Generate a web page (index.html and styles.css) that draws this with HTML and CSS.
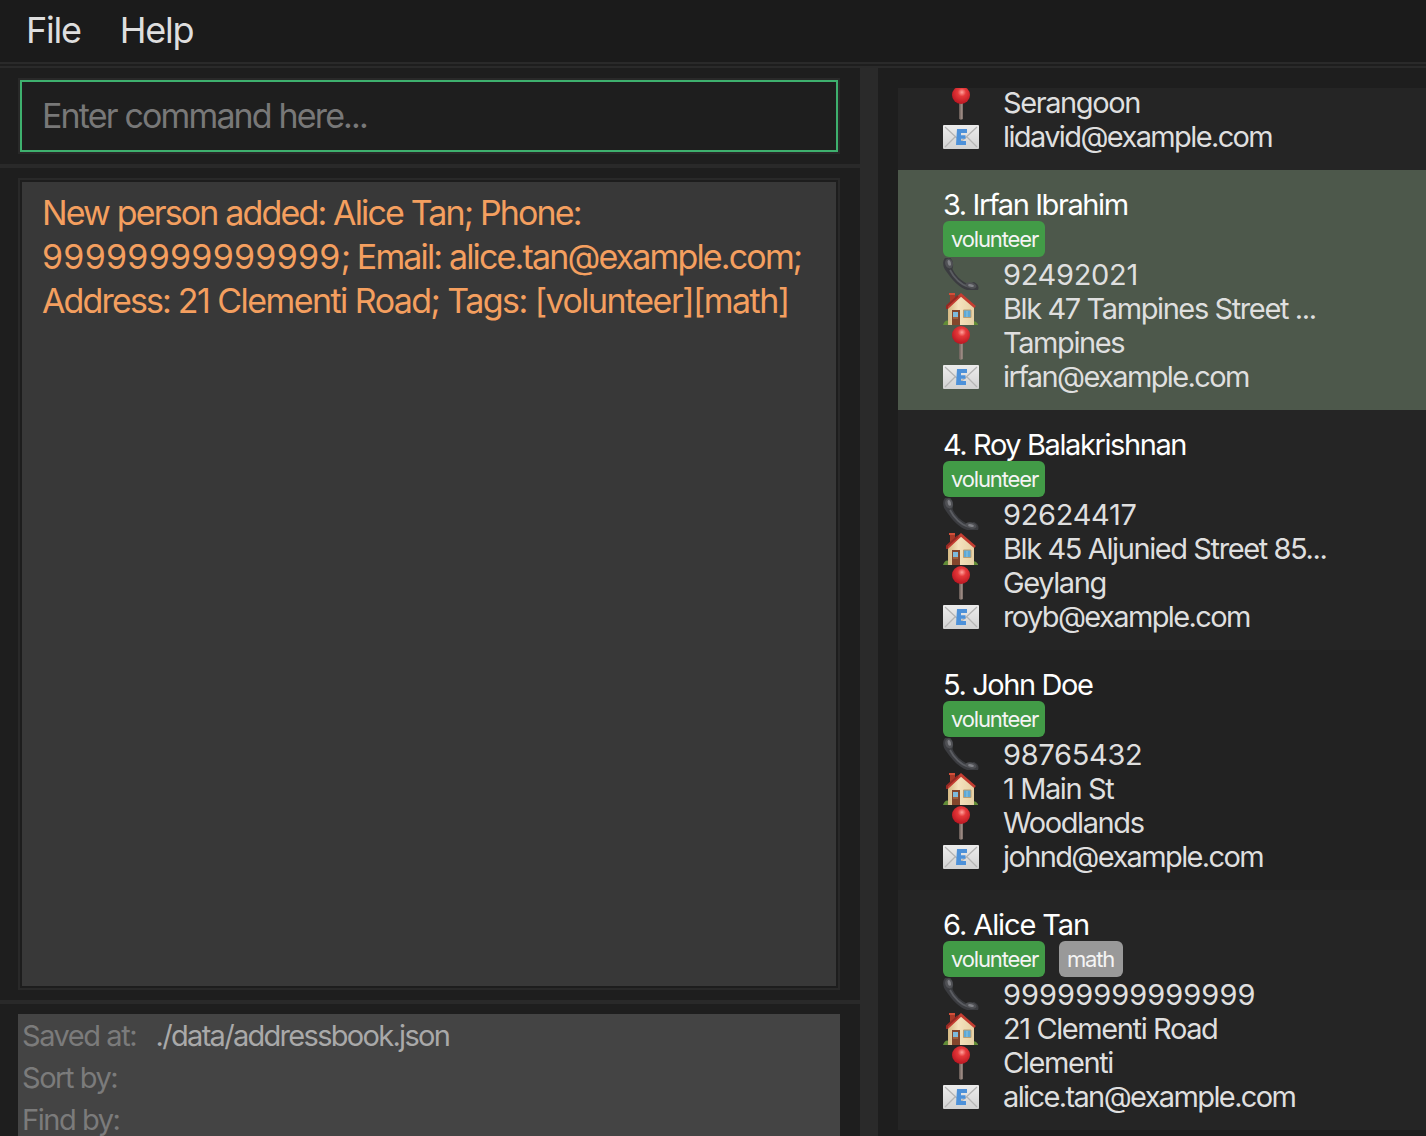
FILE: index.html
```html
<!DOCTYPE html>
<html lang="en">
<head>
<meta charset="utf-8">
<title>Address Book</title>
<link rel="stylesheet" href="styles.css">
</head>
<body>
<svg class="defs" width="0" height="0" aria-hidden="true">
  <defs>
    <linearGradient id="paper" x1="0" y1="0" x2="0" y2="1"><stop offset="0" stop-color="#ededed"/><stop offset="1" stop-color="#d2d2d2"/></linearGradient>
    <radialGradient id="ball" cx=".55" cy=".35" r=".65"><stop offset="0" stop-color="#ffa29b"/><stop offset=".35" stop-color="#e5393a"/><stop offset="1" stop-color="#b91520"/></radialGradient>
    <linearGradient id="wall" x1="0" y1="0" x2="1" y2="0"><stop offset="0" stop-color="#d5b984"/><stop offset=".4" stop-color="#f4e2bd"/><stop offset="1" stop-color="#e6d0a4"/></linearGradient>
    <symbol id="phone" viewBox="0 0 36 34">
      <path d="M2 0C-1 4 0 9 3 13C9 22 17 30 24 32L35 32Q37 27 31 24L25 26C18 23 12 17 9.500 11Q11.500 4 7.500 0Z" fill="#3b3c40"/>
      <path d="M7 12C11 20 18 27 25 28.500" fill="none" stroke="#5b5d62" stroke-width="1.800"/>
      <ellipse cx="6" cy="5.500" rx="3.800" ry="5" fill="#505155" transform="rotate(-15 6 5.500)"/>
      <ellipse cx="6.300" cy="5" rx="1.600" ry="3" fill="#818287" transform="rotate(-15 6 5)"/>
      <ellipse cx="28" cy="27.500" rx="5.500" ry="3" fill="#505155" transform="rotate(12 28 27.500)"/>
      <ellipse cx="28" cy="27.500" rx="3" ry="1.400" fill="#818287" transform="rotate(12 28 27.500)"/>
    </symbol>
    <symbol id="house" viewBox="0 0 36 34">
      <path d="M0 33Q2 27 6 29L8 33ZM28 33Q31 26 35 32V33Z" fill="#628d37"/>
      <path d="M7 2H12V10H7Z" fill="#a83a29"/><path d="M6 1H12V3H6Z" fill="#d14e39"/>
      <path d="M5 33V15L18 3L31 15V33Z" fill="url(#wall)"/>
      <path d="M4 16L18 3L32 15" fill="none" stroke="#c43d31" stroke-width="2.800"/>
      <path d="M4 17V14L15 4" fill="none" stroke="#952923" stroke-width="2"/>
      <path d="M9 18H17V33H9Z" fill="#83462c"/>
      <path d="M10 20H15V25H10Z" fill="#7dbbdc"/><path d="M10 25H15V27H10Z" fill="#a1623e"/>
      <path d="M20.500 18H28V25.500H20.500Z" fill="#5da9d8" stroke="#bd9f72"/>
      <path d="M24 19V25" stroke="#8dc4df"/>
    </symbol>
    <symbol id="pin" viewBox="0 0 36 34">
      <path d="M16.500 16H19.800V33Q18 34 16.500 33Z" fill="#9b8982"/><path d="M16.300 16H17.600V33H16.300Z" fill="#756762"/>
      <circle cx="18" cy="9" r="9" fill="url(#ball)"/>
    </symbol>
    <symbol id="mail" viewBox="0 0 36 34">
      <rect x="0" y="5" width="36" height="24" rx="1" fill="url(#paper)"/>
      <path d="M2 7L15 19Q18 22 21 19L34 7M2 27L12 17M34 27L24 17" fill="none" stroke="#b5b5b5" stroke-width="1.300"/>
      <path d="M14 9H24V13H18V15.300H22.500V18.700H18V21H23V25H13Z" fill="#4d91d9"/>
    </symbol>
  </defs>
</svg>
<div class="app">
  <nav class="menu"><span>File</span><span>Help</span></nav>
  <div class="rule"></div>
  <main class="split">
    <section class="left">
      <div class="command"><div class="field">Enter command here...</div></div>
      <div class="result"><div class="message"><div>New person added: Alice Tan; Phone:</div><div><span class="digits">99999999999999</span>; Email: alice.tan@example.com;</div><div>Address: <span class="loose">21 Clementi Road; Tags: [volunteer][math]</span></div></div></div>
      <div class="status"><dl>
        <div><dt>Saved at:</dt><dd>./data/addressbook.json</dd></div>
        <div><dt>Sort by:</dt></div>
        <div><dt>Find by:</dt></div>
      </dl></div>
    </section>
    <div class="divider"></div>
    <section class="right"><div class="list">
      <article class="card partial">
        <div class="row first"><svg><use href="#pin"/></svg><span>Serangoon</span></div>
        <div class="row"><svg><use href="#mail"/></svg><span class="email">lidavid@example.com</span></div>
      </article>
      <article class="card selected">
        <h2>3. Irfan Ibrahim</h2>
        <div class="tags"><span class="tag volunteer">volunteer</span></div>
        <div class="row"><svg><use href="#phone"/></svg><span class="num">92492021</span></div>
        <div class="row"><svg><use href="#house"/></svg><span>Blk 47 Tampines Street ...</span></div>
        <div class="row"><svg><use href="#pin"/></svg><span>Tampines</span></div>
        <div class="row"><svg><use href="#mail"/></svg><span class="email">irfan@example.com</span></div>
      </article>
      <article class="card even">
        <h2>4. Roy Balakrishnan</h2>
        <div class="tags"><span class="tag volunteer">volunteer</span></div>
        <div class="row"><svg><use href="#phone"/></svg><span class="num">92624417</span></div>
        <div class="row"><svg><use href="#house"/></svg><span>Blk 45 Aljunied Street 85...</span></div>
        <div class="row"><svg><use href="#pin"/></svg><span>Geylang</span></div>
        <div class="row"><svg><use href="#mail"/></svg><span class="email">royb@example.com</span></div>
      </article>
      <article class="card">
        <h2>5. John Doe</h2>
        <div class="tags"><span class="tag volunteer">volunteer</span></div>
        <div class="row"><svg><use href="#phone"/></svg><span class="num">98765432</span></div>
        <div class="row"><svg><use href="#house"/></svg><span>1 Main St</span></div>
        <div class="row"><svg><use href="#pin"/></svg><span>Woodlands</span></div>
        <div class="row"><svg><use href="#mail"/></svg><span class="email">johnd@example.com</span></div>
      </article>
      <article class="card even">
        <h2 class="name-wide">6. Alice Tan</h2>
        <div class="tags"><span class="tag volunteer">volunteer</span><span class="tag math">math</span></div>
        <div class="row"><svg><use href="#phone"/></svg><span class="num long">99999999999999</span></div>
        <div class="row"><svg><use href="#house"/></svg><span>21 Clementi Road</span></div>
        <div class="row"><svg><use href="#pin"/></svg><span>Clementi</span></div>
        <div class="row"><svg><use href="#mail"/></svg><span class="email">alice.tan@example.com</span></div>
      </article>
    </div></section>
  </main>
</div>
</body>
</html>
```

FILE: styles.css
```css
* { box-sizing: border-box; }
body { margin: 0; background: #1e1e1e; font-family: Inter, "Liberation Sans", sans-serif; overflow: hidden; }
.defs { display: block; }
.app { height: 1136px; display: flex; flex-direction: column; overflow: hidden; white-space: nowrap; }
.menu { flex: none; height: 62px; padding: 0 26px 2px; display: flex; gap: 39px; align-items: center; background: #1b1b1b; color: #dedede; font-size: 36px; letter-spacing: -1.25px; }
.rule { flex: none; height: 6px; border: solid #2a2a2a; border-width: 2px 0; }
.split { flex: 1; min-height: 0; display: flex; }
.left { width: 860px; display: flex; flex-direction: column; }
.command { flex: none; height: 100px; padding: 10px 20px 10px 18px; border-bottom: 4px solid #292929; }
.field { height: 76px; border: 2px solid #292929; display: flex; align-items: center; outline: 2px solid #3eb06e; outline-offset: -4px; padding: 0 0 2px 22px; font-size: 34px; letter-spacing: -1.85px; color: #787878; }
.result { flex: none; height: 836px; padding: 10px 20px 10px 18px; border-bottom: 4px solid #292929; }
.message { height: 812px; border: 2px solid #292929; background: #383838; outline: 2px solid #1d1d1d; outline-offset: -4px; padding: 11px 22px; font-size: 34px; line-height: 44px; letter-spacing: -1.85px; color: #f49f5f; }
.digits { letter-spacing: .25px; }
.loose { letter-spacing: -1.55px; }
.status { flex: 1; padding: 10px 20px 0 18px; }
dl { margin: 0; height: 122px; background: #444; padding: 1px 4px; font-size: 29px; line-height: 42px; letter-spacing: -1.45px; color: #7b7b7b; }
dl > div { display: flex; height: 42px; gap: 19.5px; }
dd { margin: 0; color: #a9a9a9; letter-spacing: -1.7px; }
.divider { width: 18px; background: #2a2a2a; }
.right { flex: 1; padding: 20px 0 0 20px; }
.list { overflow: hidden; }
.card { height: 240px; padding: 17px 0 0 45px; background: #222; color: #dfdfdf; font-size: 29px; line-height: 34px; letter-spacing: -1.4px; }
.card.partial { height: 82px; padding: 0 0 16px 45px; }
.even, .card.partial { background: #252525; }
.card.selected { background: #4d584b; }
h2 { margin: 0; height: 34px; font: inherit; line-height: 36px; color: #fff; }
.name-wide { letter-spacing: -1.1px; }
.tags { display: flex; gap: 14px; height: 37px; }
.tag { height: 36px; padding: 0 8px; border-radius: 6px; font-size: 22px; line-height: 37px; letter-spacing: -1.15px; color: #f4f4f4; }
.volunteer { width: 102px; background: #429b47; }
.math { width: 64px; background: #999; }
.row { height: 34px; display: flex; gap: 24px; }
.row svg { width: 36px; height: 34px; flex: none; filter: blur(.5px); }
.row.first { height: 32px; line-height: 30px; }
.row.first svg { margin-top: -2px; }
.email { letter-spacing: -1.62px; }
.num { letter-spacing: -.3px; }
.num.long { letter-spacing: .05px; }
```
